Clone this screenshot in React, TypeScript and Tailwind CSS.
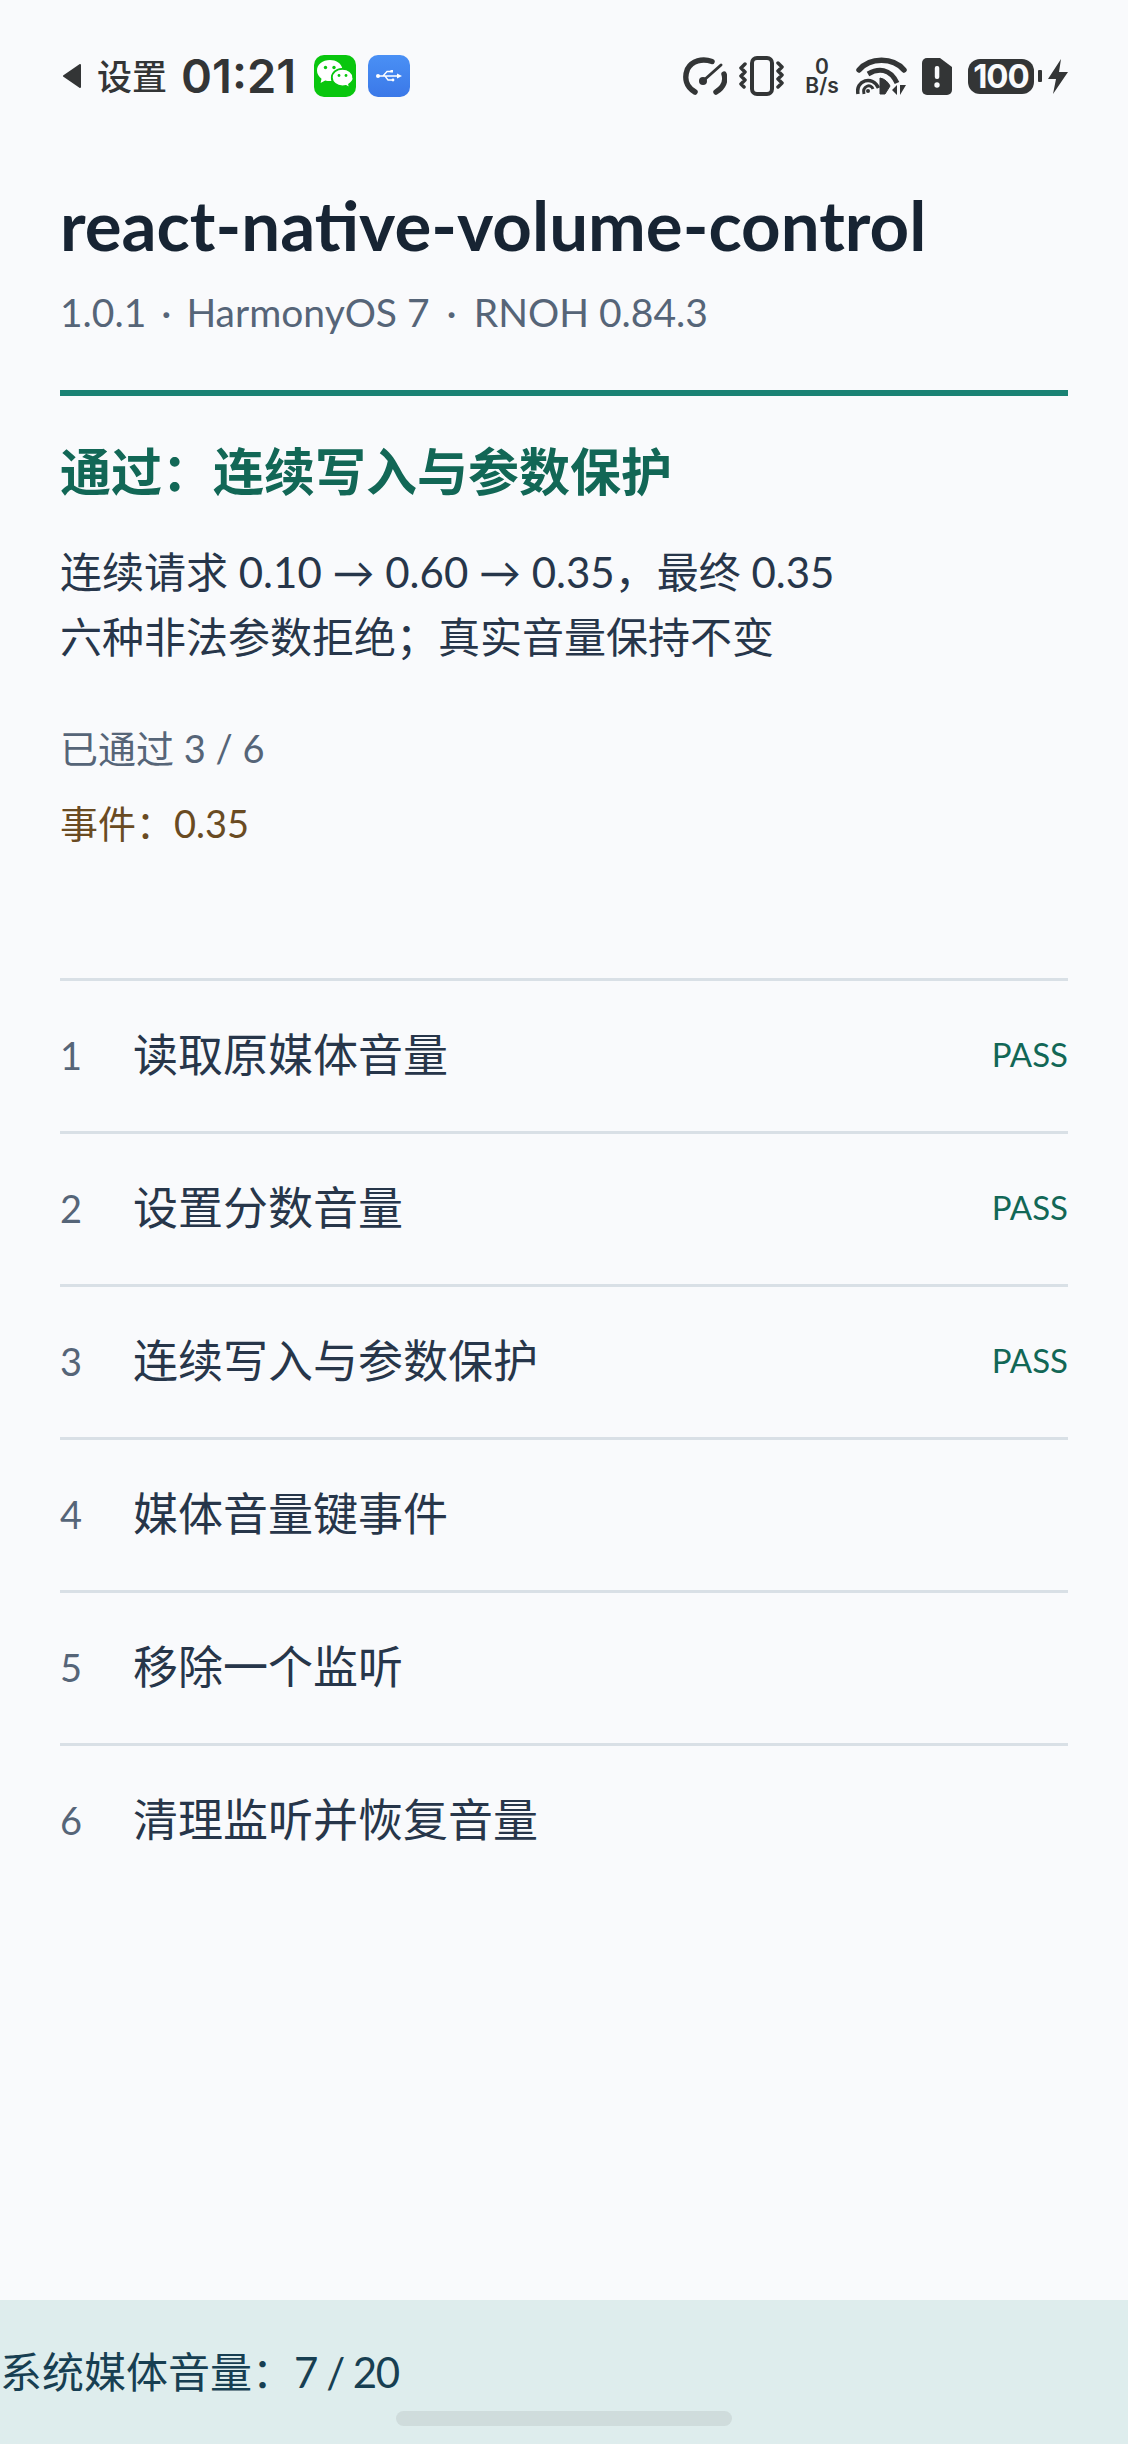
const sans = "font-['Lato','Noto_Sans_CJK_SC',sans-serif]";

const rows = [
  { n: 1, label: "读取原媒体音量", pass: true },
  { n: 2, label: "设置分数音量", pass: true },
  { n: 3, label: "连续写入与参数保护", pass: true },
  { n: 4, label: "媒体音量键事件", pass: false },
  { n: 5, label: "移除一个监听", pass: false },
  { n: 6, label: "清理监听并恢复音量", pass: false },
];

function WeChat() {
  return (
    <div className="w-[42px] h-[42px] rounded-[10px] bg-[#09c60e] flex items-center justify-center">
      <svg width="38" height="34" viewBox="0 0 38 34">
        <path d="M14 1C6.5 1 1 5.6 1 11.5c0 3.3 1.8 6.2 4.5 8.2L4.6 24l4.6-2.6c1.5.4 3.1.7 4.8.7l1.5-.1c-.4-1-.6-2.1-.6-3.2 0-5.5 5-9.8 11.3-9.8C25 4 20 1 14 1z" fill="#fff" />
        <path d="M37 18.600c0-4.800-4.600-8.600-10.500-8.600S16 13.800 16 18.600s4.600 8.600 10.500 8.600c1.200 0 2.400-.2 3.500-.5l3.700 2.100-.8-3.500c2.800-1.700 4.600-4.300 4.600-6.700z" fill="#fff" stroke="#09c60e" strokeWidth="1.500" />
        <circle cx="9.500" cy="8.500" r="1.700" fill="#09c60e" />
        <circle cx="18" cy="8.500" r="1.700" fill="#09c60e" />
        <circle cx="23" cy="16.500" r="1.400" fill="#09c60e" />
        <circle cx="30" cy="16.500" r="1.400" fill="#09c60e" />
      </svg>
    </div>
  );
}

function Usb() {
  return (
    <div className="w-[42px] h-[42px] rounded-[10px] bg-gradient-to-b from-[#4a90f5] to-[#3b78e8] flex items-center justify-center">
      <svg width="28" height="16" viewBox="0 0 28 16" fill="none" stroke="#fff" strokeWidth="1.300">
        <circle cx="3" cy="8" r="2" fill="#fff" stroke="none" />
        <path d="M3 8h20M8 8l4-4.500h4M10 8l3 4h4" />
        <rect x="15.500" y="2" width="2.500" height="2.500" fill="#fff" stroke="none" />
        <circle cx="18" cy="12" r="1.400" fill="#fff" stroke="none" />
        <path d="M22 5.500 27 8l-5 2.500z" fill="#fff" stroke="none" />
      </svg>
    </div>
  );
}

function StatusIcons() {
  const c = "#333536";
  return (
    <div className="flex items-center">
      <svg width="44" height="38" viewBox="0 0 44 38" fill="none" stroke={c} strokeWidth="5.500" strokeLinecap="round">
        <path d="M12 35C3 30 1 21 4.500 12 9 4 19 1 29 4.500" />
        <path d="M33 35c8-5 10-12 8-18" />
        <path d="M20 24 38 8" strokeWidth="3" />
        <circle cx="20" cy="24" r="4" fill={c} stroke="none" />
      </svg>
      <svg className="ml-[12px]" width="45" height="40" viewBox="0 0 45 40" fill="none" stroke={c}>
        <rect x="13" y="2" width="20" height="36" rx="5" strokeWidth="4" />
        <path d="M6 8 2 12l4 4-4 4 4 4-4 4 3 3M39 7l4 4-4 4 4 4-4 4 4 4-4 4" strokeWidth="3.500" strokeLinejoin="round" strokeLinecap="round" />
      </svg>
      <div className="ml-[21px] w-[34px] text-center text-[21px] leading-[19px] text-[#333536] font-semibold font-['Inter',sans-serif]">
        0
        <br />
        B/s
      </div>
      <svg className="ml-[17px]" width="51" height="39" viewBox="0 0 51 39" fill="none" stroke={c}>
        <path d="M3 13C14 0 37 0 48 13" strokeWidth="5.500" strokeLinecap="round" />
        <path d="M12 17c10-6 22-6 29 9" strokeWidth="5" />
        <path d="M2 37C-1 23 17 18 22.500 31" strokeWidth="3.500" />
        <path d="M8 37c-2-8 7-11 9-5" strokeWidth="3" />
        <circle cx="12" cy="34" r="2" fill={c} stroke="none" />
        <path d="M24 37V21c5 1 8 4 10 8l-5 8z" fill={c} />
        <path d="M41 38v-10l-5 5zM44 28v10l6-10z" fill={c} stroke="none" />
      </svg>
      <svg className="ml-[15px]" width="30" height="37" viewBox="0 0 30 37">
        <path d="M5 0h13l12 9v23a5 5 0 0 1-5 5H5a5 5 0 0 1-5-5V5a5 5 0 0 1 5-5z" fill={c} />
        <rect x="12.800" y="8" width="4.500" height="13" rx="2" fill="#f9fafc" />
        <circle cx="15" cy="27" r="2.700" fill="#f9fafc" />
      </svg>
      <div className="ml-[16px] w-[66px] h-[35px] rounded-[12px] bg-[#333536] text-[#f9fafc] flex items-center justify-center text-[33px] font-bold font-['Inter',sans-serif] leading-none tracking-[-1px]">
        100
      </div>
      <div className="ml-[4px] w-[4px] h-[12px] rounded-[1px] bg-[#333536]" />
      <svg className="ml-[6px]" width="20" height="35" viewBox="0 0 20 35">
        <path d="M13 0 0 20h8L5 35l15-22h-9z" fill={c} />
      </svg>
    </div>
  );
}

export default function App() {
  return (
    <div className={`h-[2444px] w-[1128px] bg-[#f9fafc] flex flex-col ${sans}`}>
      <div className="flex items-center justify-between h-[152px] px-[60px] shrink-0">
        <div className="flex items-center text-[#333536]">
          <svg className="ml-[2px]" width="20" height="24" viewBox="0 0 20 24">
            <path d="M18 1v22L2 12z" fill="#333536" stroke="#333536" strokeLinejoin="round" strokeWidth="2" />
          </svg>
          <span className="ml-[15px] text-[35px] font-medium">设置</span>
          <span className="ml-[14px] text-[47px] font-semibold font-['Inter',sans-serif]">01:21</span>
          <div className="ml-[18px]"><WeChat /></div>
          <div className="ml-[12px]"><Usb /></div>
        </div>
        <StatusIcons />
      </div>

      <div className="px-[60px] flex-1 flex flex-col">
        <h1 className="mt-[35px] text-[69px] leading-[76px] font-bold text-[#172433]">react-native-volume-control</h1>
        <p className="mt-[24px] text-[39px] leading-[50px] text-[#566578]">
          1.0.1<span className="mx-[5px]"> · </span>HarmonyOS 7<span className="mx-[7px]"> · </span>RNOH 0.84.3
        </p>
        <div className="mt-[53px] h-[6px] bg-[#1a8274]" />
        <h2 className="mt-[44px] text-[51px] leading-[64px] font-bold text-[#126756]">通过：连续写入与参数保护</h2>
        <p className="mt-[36px] text-[42px] leading-[65px] text-[#27364a]">
          连续请求 0.10 → 0.60 → 0.35，最终 0.35
          <br />
          六种非法参数拒绝；真实音量保持不变
        </p>
        <p className="mt-[53px] text-[38px] leading-[50px] text-[#566578]">已通过 3 / 6</p>
        <p className="mt-[25px] text-[38px] leading-[50px] text-[#6a4b22]">事件：0.35</p>

        <div className="mt-[130px]">
          {rows.map((r) => (
            <div key={r.n} className="h-[153px] border-t-[3px] border-[#d9e0e6] flex items-center">
              <span className="w-[73px] pb-[2px] text-[38px] text-[#566578]">{r.n}</span>
              <span className="flex-1 text-[45px] text-[#27364a]">{r.label}</span>
              {r.pass && <span className="pb-[2px] text-[33px] text-[#126756]">PASS</span>}
            </div>
          ))}
        </div>
      </div>

      <div className="h-[144px] bg-[#deeded] flex items-center shrink-0 relative">
        <span className="text-[42px] text-[#173f52]">
          系统媒体音量：<span className="tracking-[-1.5px]">7 / 20</span>
        </span>
        <div className="absolute left-[396px] top-[111px] w-[336px] h-[15px] rounded-full bg-[#cfdcdc]" />
      </div>
    </div>
  );
}
